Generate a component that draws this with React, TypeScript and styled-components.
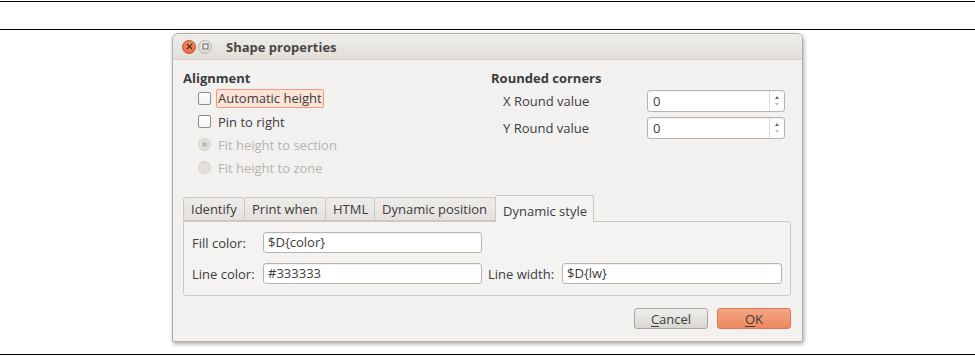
import React from "react";
import styled, { createGlobalStyle } from "styled-components";

const GlobalStyle = createGlobalStyle`
  html, body {
    margin: 0;
    padding: 0;
    background: #ffffff;
  }
  body {
    font-family: "Open Sans", "DejaVu Sans", sans-serif;
    font-size: 13px;
    color: #3c3c3c;
  }
`;

const Page = styled.div`
  width: 975px;
  height: 356px;
  padding-top: 1px;
  box-sizing: border-box;
  display: flex;
  flex-direction: column;
`;

const Rule = styled.div`
  height: 1px;
  background: #000;
`;

const HeaderCell = styled.div`
  height: 27px;
`;

const ContentCell = styled.div`
  height: 324px;
  box-sizing: border-box;
  padding: 3px 0 0 172px;
`;

const Dialog = styled.div`
  width: 631px;
  height: 309px;
  box-sizing: border-box;
  border: 1px solid #b3aea6;
  border-radius: 6px 6px 2px 2px;
  background: #f2f1f0;
  box-shadow: 1px 2px 4px rgba(0, 0, 0, 0.35);
  display: flex;
  flex-direction: column;
  overflow: hidden;
`;

const TitleBar = styled.div`
  height: 25px;
  border-bottom: 1px solid #d3cfc8;
  background: linear-gradient(#efedea, #e2dfda);
  display: flex;
  align-items: center;
  padding-left: 9px;
  gap: 2px;
`;

const WinButton = styled.span<{ $close?: boolean }>`
  width: 14px;
  height: 14px;
  border-radius: 50%;
  box-sizing: border-box;
  display: flex;
  align-items: center;
  justify-content: center;
  border: 1px solid ${(p) => (p.$close ? "#c2532b" : "#bdb8b0")};
  background: ${(p) =>
    p.$close
      ? "radial-gradient(circle at 50% 35%, #f89b70, #e45a2b)"
      : "radial-gradient(circle at 50% 35%, #f3f2f0, #d5d1cb)"};
`;

const Title = styled.span`
  margin-left: 12px;
  font-weight: bold;
  font-size: 13px;
  color: #4a4741;
`;

const Body = styled.div`
  flex: 1;
  padding: 10px 11px 12px 10px;
  display: flex;
  flex-direction: column;
`;

const TopSection = styled.div`
  display: grid;
  grid-template-columns: 308px 1fr;
  height: 109px;
`;

const Column = styled.div`
  display: flex;
  flex-direction: column;
`;

const SectionHeader = styled.div`
  font-weight: bold;
  line-height: 17px;
  height: 17px;
`;

const OptionRow = styled.div<{ $disabled?: boolean }>`
  height: 23px;
  display: flex;
  align-items: center;
  padding-left: 15px;
  gap: 6px;
  color: ${(p) => (p.$disabled ? "#b7b3ad" : "#3c3c3c")};
`;

const CheckBox = styled.span`
  width: 13px;
  height: 13px;
  box-sizing: border-box;
  border: 1px solid #8f8b85;
  border-radius: 2px;
  background: linear-gradient(#ffffff, #f4f3f1);
  margin-right: 1px;
`;

const Radio = styled.span<{ $checked?: boolean }>`
  width: 13px;
  height: 13px;
  box-sizing: border-box;
  border: 1px solid #d4d0ca;
  border-radius: 50%;
  background: #e3e0dc;
  margin-right: 1px;
  display: flex;
  align-items: center;
  justify-content: center;
  &::after {
    content: "";
    width: 5px;
    height: 5px;
    border-radius: 50%;
    background: ${(p) => (p.$checked ? "#bdb9b3" : "transparent")};
  }
`;

const FocusLabel = styled.span`
  margin-left: -2px;
  padding: 0 1px;
  line-height: 17px;
  background: #fbe3d8;
  border: 1px solid #f09a78;
  border-radius: 2px;
`;

const SpinRow = styled.div<{ $top: number }>`
  margin-top: ${(p) => p.$top}px;
  height: 22px;
  display: grid;
  grid-template-columns: 144px 138px;
  align-items: center;
  padding-left: 12px;
`;

const SpinBox = styled.div`
  height: 22px;
  box-sizing: border-box;
  border: 1px solid #b9b4ad;
  border-radius: 3px;
  background: #fff;
  display: flex;
  box-shadow: inset 0 1px 1px rgba(0, 0, 0, 0.06);
`;

const SpinValue = styled.span`
  flex: 1;
  padding-left: 5px;
  line-height: 20px;
`;

const SpinButtons = styled.div`
  width: 14px;
  border-left: 1px solid #dedad4;
  display: flex;
  flex-direction: column;
  align-items: center;
  justify-content: space-around;
  padding: 3px 0;
`;

const Arrow = styled.span<{ $down?: boolean }>`
  width: 0;
  height: 0;
  border-left: 2.5px solid transparent;
  border-right: 2.5px solid transparent;
  ${(p) =>
    p.$down
      ? "border-top: 3px solid #c4c0ba;"
      : "border-bottom: 3px solid #6a665f;"}
`;

const Tabs = styled.div`
  margin-top: 16px;
  display: flex;
  flex-direction: column;
`;

const TabRow = styled.div`
  height: 26px;
  display: flex;
  align-items: flex-end;
  position: relative;
  z-index: 1;
`;

const Tab = styled.div<{ $active?: boolean; $w: number }>`
  width: ${(p) => p.$w}px;
  box-sizing: border-box;
  height: ${(p) => (p.$active ? 27 : 24)}px;
  margin-bottom: ${(p) => (p.$active ? -1 : 0)}px;
  padding-left: 7px;
  padding-top: ${(p) => (p.$active ? 3 : 0)}px;
  display: flex;
  align-items: center;
  border: 1px solid #ccc8c2;
  border-bottom: ${(p) => (p.$active ? "none" : "1px solid #ccc8c2")};
  margin-left: -1px;
  border-radius: 3px 3px 0 0;
  background: ${(p) =>
    p.$active ? "#f4f3f2" : "linear-gradient(#eeecea, #e4e1dd)"};
  &:first-child {
    margin-left: 0;
  }
`;

const Panel = styled.div`
  height: 75px;
  box-sizing: border-box;
  border: 1px solid #ccc8c2;
  border-radius: 0 3px 3px 3px;
  background: #f4f3f2;
  padding: 10px 10px 0 8px;
  display: grid;
  grid-template-columns: 71px 225px 74px 220px;
  grid-template-rows: 21px 21px;
  row-gap: 10px;
  align-items: center;
`;

const FieldLabel = styled.span<{ $col?: number }>`
  grid-column: ${(p) => p.$col ?? 1};
`;

const TextField = styled.div<{ $col?: number }>`
  grid-column: ${(p) => p.$col ?? 2};
  width: ${(p) => (p.$col === 4 ? 220 : 219)}px;
  height: 21px;
  box-sizing: border-box;
  border: 1px solid #b9b4ad;
  border-radius: 3px;
  background: #fff;
  padding-left: 4px;
  line-height: 19px;
  box-shadow: inset 0 1px 1px rgba(0, 0, 0, 0.06);
`;

const ButtonRow = styled.div`
  margin-top: 12px;
  display: flex;
  justify-content: flex-end;
  gap: 9px;
`;

const Button = styled.div<{ $primary?: boolean }>`
  width: 74px;
  height: 21px;
  box-sizing: border-box;
  border-radius: 3px;
  border: 1px solid ${(p) => (p.$primary ? "#d97a55" : "#a8a49e")};
  background: ${(p) =>
    p.$primary
      ? "linear-gradient(#f5a583, #ee8860)"
      : "linear-gradient(#f0efed, #d9d6d2)"};
  display: flex;
  align-items: center;
  justify-content: center;
  color: #3c3c3c;
  u {
    text-decoration-thickness: 1px;
    text-underline-offset: 2px;
  }
`;

const tabs = [
  { label: "Identify", w: 62 },
  { label: "Print when", w: 82 },
  { label: "HTML", w: 50 },
  { label: "Dynamic position", w: 122 },
  { label: "Dynamic style", w: 99, active: true },
];

export default function App() {
  return (
    <>
      <GlobalStyle />
      <Page>
        <Rule />
        <HeaderCell />
        <Rule />
        <ContentCell>
          <Dialog>
            <TitleBar>
              <WinButton $close>
                <svg width="7" height="7" viewBox="0 0 7 7">
                  <path d="M1 1L6 6M6 1L1 6" stroke="#4a2a1c" strokeWidth="1.2" />
                </svg>
              </WinButton>
              <WinButton>
                <svg width="7" height="7" viewBox="0 0 7 7">
                  <rect x="1" y="1" width="5" height="5" fill="none" stroke="#6b675f" strokeWidth="1" />
                </svg>
              </WinButton>
              <Title>Shape properties</Title>
            </TitleBar>
            <Body>
              <TopSection>
                <Column>
                  <SectionHeader>Alignment</SectionHeader>
                  <OptionRow>
                    <CheckBox />
                    <FocusLabel>Automatic height</FocusLabel>
                  </OptionRow>
                  <OptionRow>
                    <CheckBox />
                    <span>Pin to right</span>
                  </OptionRow>
                  <OptionRow $disabled>
                    <Radio $checked />
                    <span>Fit height to section</span>
                  </OptionRow>
                  <OptionRow $disabled>
                    <Radio />
                    <span>Fit height to zone</span>
                  </OptionRow>
                </Column>
                <Column>
                  <SectionHeader>Rounded corners</SectionHeader>
                  <SpinRow $top={3}>
                    <span>X Round value</span>
                    <SpinBox>
                      <SpinValue>0</SpinValue>
                      <SpinButtons>
                        <Arrow />
                        <Arrow $down />
                      </SpinButtons>
                    </SpinBox>
                  </SpinRow>
                  <SpinRow $top={5}>
                    <span>Y Round value</span>
                    <SpinBox>
                      <SpinValue>0</SpinValue>
                      <SpinButtons>
                        <Arrow />
                        <Arrow $down />
                      </SpinButtons>
                    </SpinBox>
                  </SpinRow>
                </Column>
              </TopSection>
              <Tabs>
                <TabRow>
                  {tabs.map((t) => (
                    <Tab key={t.label} $w={t.w} $active={t.active}>
                      {t.label}
                    </Tab>
                  ))}
                </TabRow>
                <Panel>
                  <FieldLabel>Fill color:</FieldLabel>
                  <TextField>$D{"{color}"}</TextField>
                  <FieldLabel>Line color:</FieldLabel>
                  <TextField>#333333</TextField>
                  <FieldLabel $col={3}>Line width:</FieldLabel>
                  <TextField $col={4}>$D{"{lw}"}</TextField>
                </Panel>
              </Tabs>
              <ButtonRow>
                <Button>
                  <span>
                    <u>C</u>ancel
                  </span>
                </Button>
                <Button $primary>
                  <span>
                    <u>O</u>K
                  </span>
                </Button>
              </ButtonRow>
            </Body>
          </Dialog>
        </ContentCell>
        <Rule />
      </Page>
    </>
  );
}
